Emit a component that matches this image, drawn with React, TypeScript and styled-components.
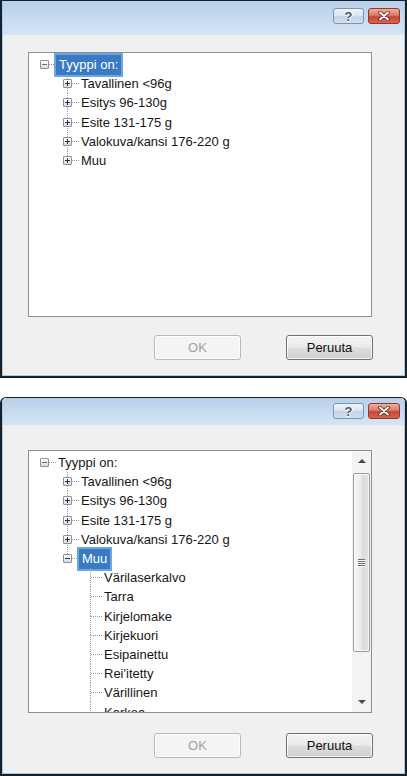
import React from "react";
import styled, { createGlobalStyle } from "styled-components";

const GlobalStyle = createGlobalStyle`
  html, body { margin: 0; padding: 0; background: #ffffff; }
  body { font-family: "Liberation Sans", Arial, sans-serif; }
  * { box-sizing: border-box; }
`;

const Page = styled.div`
  width: 407px;
  display: flex;
  flex-direction: column;
  gap: 19px;
`;

const Window = styled.div<{ $height: number; $rounded?: boolean }>`
  width: 407px;
  height: ${(p) => p.$height}px;
  display: flex;
  flex-direction: column;
  border: 2px solid #16212a;
  border-top-width: 1px;
  border-radius: ${(p) => (p.$rounded ? "6px 6px 0 0" : "0")};
  overflow: hidden;
  background: #16212a;
`;

const Frame = styled.div`
  flex: 1;
  display: flex;
  flex-direction: column;
  border: 1px solid #a9c7e6;
  border-top: none;
  background: #f0f0f0;
`;

const TitleBar = styled.div<{ $height: number; $padTop: number }>`
  height: ${(p) => p.$height}px;
  flex: none;
  display: flex;
  justify-content: flex-end;
  align-items: flex-start;
  gap: 4px;
  padding: ${(p) => p.$padTop}px 4px 0 0;
  background: linear-gradient(#b8cfe9, #cddff1 70%, #d6e5f4);
`;

const HelpButton = styled.div`
  width: 31px;
  height: 16px;
  display: flex;
  align-items: center;
  justify-content: center;
  border: 1px solid #7a93b0;
  border-radius: 3px;
  background: linear-gradient(#eef3f9, #d9e4f0 48%, #c3d4e7 52%, #d2dfec);
  font: bold 13px "Liberation Sans", Arial, sans-serif;
  color: #4a5a70;
  text-shadow: 0 1px 0 #ffffff, 1px 0 0 #ffffff;
`;

const CloseButton = styled.div`
  width: 32px;
  height: 16px;
  display: flex;
  align-items: center;
  justify-content: center;
  border: 1px solid #8e372b;
  border-radius: 3px;
  background: linear-gradient(#ebb0a5, #db7a69 45%, #c9452f 55%, #d7664f);
`;

const Body = styled.div<{ $padTop: number }>`
  flex: 1;
  display: flex;
  flex-direction: column;
  padding: ${(p) => p.$padTop}px 31px 0 25px;
`;

const TreeBox = styled.div<{ $height: number }>`
  width: 344px;
  height: ${(p) => p.$height}px;
  flex: none;
  display: flex;
  border: 1px solid #8c8f94;
  background: #ffffff;
  overflow: hidden;
`;

const TreeContent = styled.div`
  flex: 1;
  display: flex;
  flex-direction: column;
  padding: 2px 0 0 4px;
  overflow: hidden;
`;

const Row = styled.div`
  height: 19.2px;
  flex: none;
  display: flex;
  align-items: stretch;
`;

const dotsV = "repeating-linear-gradient(to bottom, #9a9a9a 0 1px, transparent 1px 2px)";
const dotsH = "repeating-linear-gradient(to right, #9a9a9a 0 1px, transparent 1px 2px)";

const Cell = styled.div<{ $up?: boolean; $down?: boolean; $right?: boolean }>`
  width: 23px;
  flex: none;
  display: flex;
  align-items: center;
  justify-content: center;
  background-image: ${(p) =>
    [
      p.$up ? dotsV : "none",
      p.$down ? dotsV : "none",
      p.$right ? dotsH : "none",
    ].join(", ")};
  background-size: 1px 50%, 1px 50%, 50% 1px;
  background-position: 11px top, 11px bottom, right center;
  background-repeat: no-repeat;
`;

const ExpanderBox = styled.span<{ $open: boolean; $muted?: boolean }>`
  width: 9px;
  height: 9px;
  display: grid;
  place-items: center;
  border: 1px solid #8f9193;
  border-radius: 1px;
  background: linear-gradient(#ffffff, #e7eaee 60%, #d6dbe2);
  &::before {
    content: "";
    grid-area: 1 / 1;
    width: 5px;
    height: 1px;
    background: ${(p) => (p.$muted ? "#6c6c6c" : "#1d3150")};
  }
  &::after {
    content: "";
    grid-area: 1 / 1;
    width: 1px;
    height: 5px;
    background: ${(p) => (p.$muted ? "#6c6c6c" : "#1d3150")};
    display: ${(p) => (p.$open ? "none" : "block")};
  }
`;

const Label = styled.span<{ $selected?: boolean }>`
  align-self: center;
  height: 20px;
  display: flex;
  align-items: center;
  padding: 0 ${(p) => (p.$selected ? 3 : 2)}px;
  font-size: 13px;
  white-space: nowrap;
  color: ${(p) => (p.$selected ? "#ffffff" : "#161616")};
  background: ${(p) => (p.$selected ? "#3a7ac2" : "transparent")};
  box-shadow: ${(p) => (p.$selected ? "0 0 0 2px #6ea6df" : "none")};
`;

const ScrollBar = styled.div`
  width: 19px;
  flex: none;
  display: flex;
  flex-direction: column;
  background: #f3f3f3;
`;

const ScrollArrow = styled.div`
  height: 20px;
  flex: none;
  display: flex;
  align-items: center;
  justify-content: center;
`;

const Triangle = styled.span<{ $dir: "up" | "down" }>`
  width: 0;
  height: 0;
  border-left: 4px solid transparent;
  border-right: 4px solid transparent;
  ${(p) =>
    p.$dir === "up"
      ? "border-bottom: 4px solid #4a4a4a;"
      : "border-top: 4px solid #4a4a4a;"}
`;

const Thumb = styled.div<{ $height: number }>`
  height: ${(p) => p.$height}px;
  flex: none;
  margin: 2px 1px 0;
  display: flex;
  align-items: center;
  justify-content: center;
  border: 1px solid #9c9c9c;
  border-radius: 2px;
  background: linear-gradient(to right, #f6f6f6, #ececec 45%, #dcdcdc 55%, #e2e2e2);
  box-shadow: inset 0 0 0 1px rgba(255, 255, 255, 0.7);
`;

const Grip = styled.span`
  width: 7px;
  height: 8px;
  background: repeating-linear-gradient(to bottom, #707070 0 1px, #f8f8f8 1px 2px);
`;

const Track = styled.div`
  flex: 1;
`;

const ButtonRow = styled.div<{ $gap: number }>`
  display: flex;
  justify-content: flex-end;
  gap: 45px;
  margin-top: ${(p) => p.$gap}px;
`;

const PushButton = styled.button<{ $dim?: boolean }>`
  width: 87px;
  height: 25px;
  padding: 0;
  border-radius: 3px;
  font: 13px "Liberation Sans", Arial, sans-serif;
  border: 1px solid ${(p) => (p.$dim ? "#b6babe" : "#707070")};
  color: ${(p) => (p.$dim ? "#a2a2a2" : "#111111")};
  background: ${(p) =>
    p.$dim
      ? "#f4f4f4"
      : "linear-gradient(#f3f3f3 0%, #ebebeb 48%, #dddddd 52%, #cfcfcf 100%)"};
  box-shadow: inset 0 0 0 1px rgba(255, 255, 255, 0.8);
`;

type Node = {
  label: string;
  guides: boolean[];
  up?: boolean;
  down?: boolean;
  expander?: "plus" | "minus";
  muted?: boolean;
  selected?: boolean;
};

const TreeRow = ({ node }: { node: Node }) => (
  <Row>
    {node.guides.map((g, i) => (
      <Cell key={i} $up={g} $down={g} />
    ))}
    <Cell $up={node.up} $down={node.down} $right>
      {node.expander && (
        <ExpanderBox $open={node.expander === "minus"} $muted={node.muted} />
      )}
    </Cell>
    <Label $selected={node.selected}>{node.label}</Label>
  </Row>
);

const childLabels = [
  "Tavallinen <96g",
  "Esitys 96-130g",
  "Esite 131-175 g",
  "Valokuva/kansi 176-220 g",
];

const treeOne: Node[] = [
  { label: "Tyyppi on:", guides: [], expander: "minus", muted: true, selected: true },
  ...childLabels.map((l) => ({ label: l, guides: [false], up: true, down: true, expander: "plus" as const })),
  { label: "Muu", guides: [false], up: true, down: false, expander: "plus" },
];

const grandLabels = [
  "Värilaserkalvo",
  "Tarra",
  "Kirjelomake",
  "Kirjekuori",
  "Esipainettu",
  "Rei'itetty",
  "Värillinen",
  "Karkea",
];

const treeTwo: Node[] = [
  { label: "Tyyppi on:", guides: [], expander: "minus", muted: true },
  ...childLabels.map((l) => ({ label: l, guides: [false], up: true, down: true, expander: "plus" as const })),
  { label: "Muu", guides: [false], up: true, down: false, expander: "minus", selected: true },
  ...grandLabels.map((l) => ({ label: l, guides: [false, false], up: true, down: true })),
];

const CloseGlyph = () => (
  <svg width="14" height="10" viewBox="0 0 14 10">
    <path d="M3 1.5 L11 8.5 M11 1.5 L3 8.5" stroke="#5b1c14" strokeWidth="3.6" strokeLinecap="round" />
    <path d="M3 1.5 L11 8.5 M11 1.5 L3 8.5" stroke="#ffffff" strokeWidth="2" strokeLinecap="round" />
  </svg>
);

type DialogProps = {
  height: number;
  titleHeight: number;
  titlePad: number;
  bodyPad: number;
  treeHeight: number;
  buttonGap: number;
  rounded?: boolean;
  nodes: Node[];
  scroll?: boolean;
};

const Dialog = (p: DialogProps) => (
  <Window $height={p.height} $rounded={p.rounded}>
    <Frame>
      <TitleBar $height={p.titleHeight} $padTop={p.titlePad}>
        <HelpButton>?</HelpButton>
        <CloseButton>
          <CloseGlyph />
        </CloseButton>
      </TitleBar>
      <Body $padTop={p.bodyPad}>
        <TreeBox $height={p.treeHeight}>
          <TreeContent>
            {p.nodes.map((n, i) => (
              <TreeRow key={i} node={n} />
            ))}
          </TreeContent>
          {p.scroll && (
            <ScrollBar>
              <ScrollArrow>
                <Triangle $dir="up" />
              </ScrollArrow>
              <Thumb $height={179}>
                <Grip />
              </Thumb>
              <Track />
              <ScrollArrow>
                <Triangle $dir="down" />
              </ScrollArrow>
            </ScrollBar>
          )}
        </TreeBox>
        <ButtonRow $gap={p.buttonGap}>
          <PushButton $dim disabled>
            OK
          </PushButton>
          <PushButton>Peruuta</PushButton>
        </ButtonRow>
      </Body>
    </Frame>
  </Window>
);

export default function App() {
  return (
    <>
      <GlobalStyle />
      <Page>
        <Dialog
          height={378}
          titleHeight={34}
          titlePad={7}
          bodyPad={17}
          treeHeight={265}
          buttonGap={18}
          nodes={treeOne}
        />
        <Dialog
          height={379}
          titleHeight={27}
          titlePad={5}
          bodyPad={25}
          treeHeight={263}
          buttonGap={20}
          rounded
          nodes={treeTwo}
          scroll
        />
      </Page>
    </>
  );
}
